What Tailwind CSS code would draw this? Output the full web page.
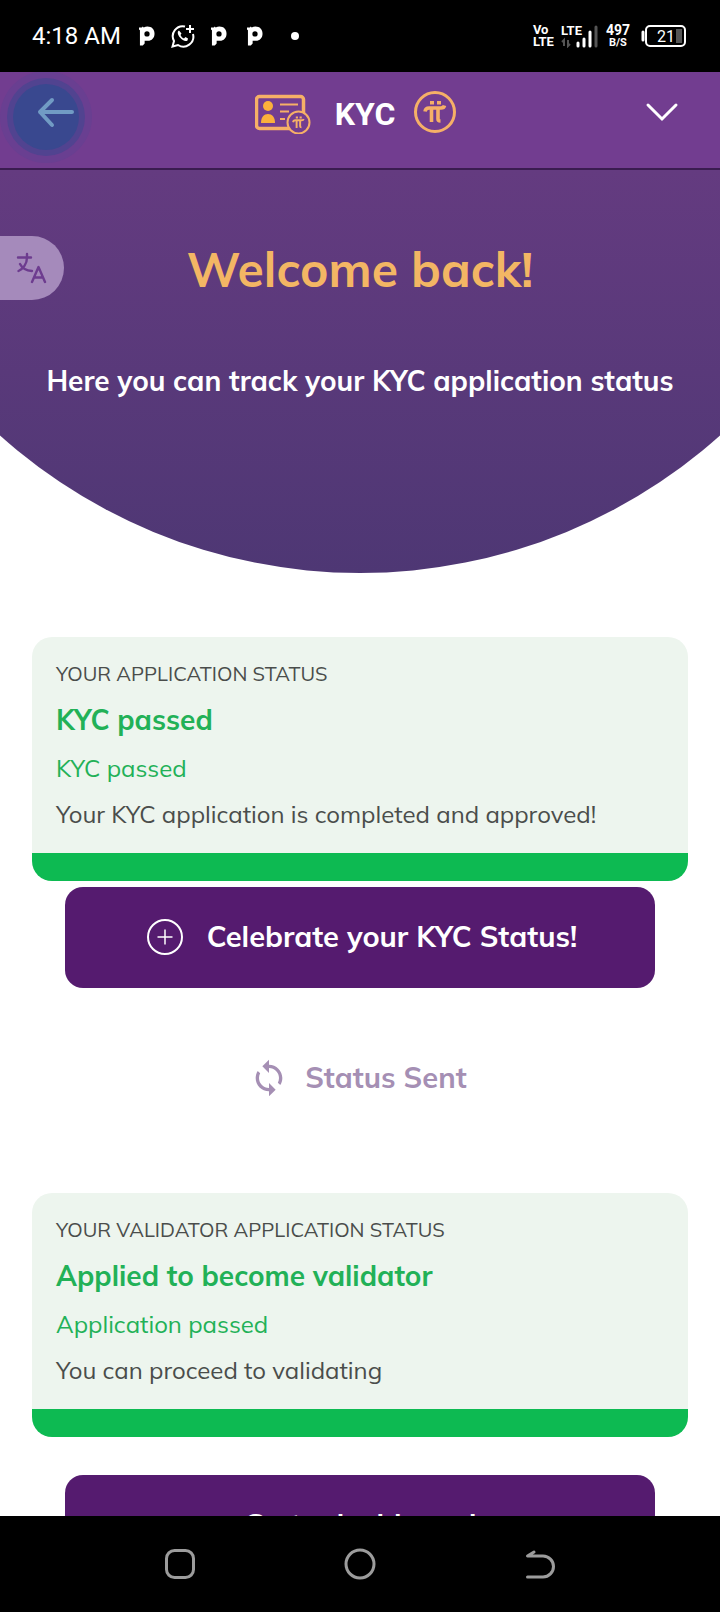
<!DOCTYPE html>
<html lang="en">
<head>
<meta charset="utf-8">
<meta name="viewport" content="width=device-width, initial-scale=1">
<title>KYC</title>
<script src="https://cdn.jsdelivr.net/npm/@tailwindcss/browser@4"></script>
</head>
<body class="flex h-screen flex-col overflow-hidden bg-white font-['Mulish','Noto_Sans',sans-serif]">
<svg class="hidden" aria-hidden="true">
  <symbol id="pi" viewBox="0 0 24 24">
    <path d="M2 11.500C2.500 8.500 4 8 6 8H18C20 8 21 7.500 21.500 5.500M8.500 8v14M15 8v11q0 2 2.500 2" fill="none" stroke="currentColor" stroke-width="3.600"/>
    <path d="M7 1h4v3.500h-4zM14 1h4v3.500h-4z" fill="currentColor"/>
  </symbol>
  <symbol id="p-app" viewBox="0 0 17 20">
    <path fill="currentColor" fill-rule="evenodd" d="M0 1h3l1-1 1 1q2-1 4-1c4.500 0 7.500 3 7.500 7.500S13.500 15 9.500 15H6v3l-2 2H1V4L0 3zM8.500 5a2.800 2.800 0 1 0 0 5.600a2.800 2.800 0 0 0 0-5.600z"/>
  </symbol>
</svg>

<div class="flex h-18 shrink-0 items-center justify-between bg-black px-8 font-['Roboto',sans-serif] text-white">
  <div class="flex items-center">
    <span class="text-2xl leading-8">4:18 AM</span>
    <svg class="ml-[18px] h-5 w-4"><use href="#p-app"/></svg>
    <svg class="ml-4 size-6" viewBox="0 0 24 24" fill="none" stroke="currentColor" stroke-width="2">
      <path d="M14 2.500A10 10 0 0 0 3 17L1.500 22.500L7 21A10 10 0 0 0 22 10M19 1v8M15 5h8"/>
      <path d="M8 6.500c-2 1-1.500 4 1 7s5.500 4.500 7.500 3l.5-2-2.500-1.500-1.500 1.500c-1.500-.500-3-2-3.500-3.500l1-1.500z" fill="currentColor" stroke="none"/>
    </svg>
    <svg class="ml-4 h-5 w-4"><use href="#p-app"/></svg>
    <svg class="ml-5 h-5 w-4"><use href="#p-app"/></svg>
    <span class="ml-7 size-2 rounded-full bg-white"></span>
  </div>
  <div class="flex items-center gap-1.5">
    <div class="flex flex-col text-[13px] leading-3 font-bold"><span>Vo</span><span>LTE</span></div>
    <svg class="h-6 w-10" viewBox="0 0 40 24">
      <text x="1" y="11" fill="currentColor" class="text-[13px] font-bold">LTE</text>
      <path d="M4 22v-6l-2 2M8 16v6l2-2" stroke="#555" stroke-width="2" fill="none"/>
      <path d="M18 22v-3M24 22v-7M30 22V8" stroke="currentColor" stroke-width="3" stroke-linecap="round"/>
      <path d="M36 22V3" stroke="#555" stroke-width="3" stroke-linecap="round"/>
    </svg>
    <div class="flex flex-col items-center font-bold"><span class="text-[14px] leading-[13px]">497</span><span class="text-[11px] leading-[11px]">B/S</span></div>
    <svg class="ml-1 h-6 w-12" viewBox="0 0 48 24">
      <rect x="6" y="2" width="39" height="20" rx="4" fill="none" stroke="currentColor" stroke-width="2"/>
      <path d="M3 8v8" stroke="currentColor" stroke-width="3" stroke-linecap="round"/>
      <rect x="36" y="5" width="6" height="14" fill="#555"/>
      <text x="17" y="18" fill="currentColor" class="text-[16px]">21</text>
    </svg>
  </div>
</div>

<header class="relative flex h-[98px] shrink-0 items-center justify-center border-b-2 border-[#3a1c50] bg-[#723d90] pr-2 pb-4">
  <button aria-label="Back" class="absolute top-0 left-0 text-[#719bc4]">
    <svg class="size-24" viewBox="0 0 96 96" fill="none">
      <circle cx="46" cy="45" r="46" fill="#693f91"/>
      <circle cx="46" cy="45" r="39" fill="#514390"/>
      <circle cx="46" cy="45" r="33" fill="#39488f"/>
      <path d="M72 40H40M52 28L40 40L52 53" stroke="currentColor" stroke-width="4" stroke-linecap="round" stroke-linejoin="round"/>
    </svg>
  </button>
  <svg class="h-11 w-14 text-[#f6b067]" viewBox="0 0 56 44" fill="none">
    <rect x="1.500" y="6.500" width="47" height="32" rx="3" stroke="currentColor" stroke-width="3.500"/>
    <circle cx="13" cy="16" r="5" fill="#fbb03b"/>
    <path d="M6 33c0-6 3-9 7-9s7 3 7 9z" fill="#fbb03b"/>
    <path d="M25 14.500h18M25 21.500h9M25 29h5" stroke="currentColor" stroke-width="2"/>
    <circle cx="43.500" cy="32.500" r="11" fill="#723d90" stroke="currentColor" stroke-width="2"/>
    <use href="#pi" x="37" y="25.500" width="13" height="14"/>
  </svg>
  <h1 class="mt-1 ml-6 font-['Roboto',sans-serif] text-[32px] leading-10 font-bold text-white">KYC</h1>
  <svg class="ml-[18px] size-11 text-[#f6b067]" viewBox="0 0 44 44">
    <circle cx="22" cy="22" r="19.500" fill="none" stroke="currentColor" stroke-width="3"/>
    <use href="#pi" x="10" y="10" width="24" height="24"/>
  </svg>
  <button aria-label="Expand" class="absolute top-6 right-10 text-white">
    <svg class="size-9" viewBox="0 0 36 36"><path d="M4 9L18 23L32 9" fill="none" stroke="currentColor" stroke-width="3" stroke-linecap="round"/></svg>
  </button>
</header>

<main class="flex min-h-0 flex-1 flex-col overflow-hidden">
  <section class="relative shrink-0 bg-linear-to-b from-[#643b80] to-[#4e3774] pt-[67px] pb-[172px] text-center [clip-path:circle(75vw_at_50%_calc(100%-75vw))]">
    <button aria-label="Translate" class="absolute top-[66px] left-0 flex h-16 w-16 items-center justify-center rounded-r-full bg-[#a58abb] text-[#6d3c8f]">
      <svg class="size-8" viewBox="0 0 32 32" fill="none" stroke="currentColor" stroke-width="2.400" stroke-linecap="round" stroke-linejoin="round">
        <path d="M2 5.500h13M11 2v3.500C11 12 7 17 2.500 19M4 12c2 4 5 6.500 12 7M16 30L22.500 15L29 30M18 25.500h9"/>
      </svg>
    </button>
    <h2 class="text-[48px] leading-16 font-bold text-[#f3b664]">Welcome back!</h2>
    <p class="mt-15 text-[28px] leading-10 font-bold text-white">Here you can track your KYC application status</p>
  </section>

  <section class="mx-8 mt-16 shrink-0 rounded-[20px] border-b-[28px] border-[#0dba52] bg-[#edf5ee] px-6 pt-[19px] pb-[21px] text-[#4a4d4b]">
    <h3 class="text-[20px] leading-9">YOUR APPLICATION STATUS</h3>
    <p class="mt-2 text-[28px] leading-10 font-bold text-[#22b157]">KYC passed</p>
    <p class="mt-2 text-[24px] leading-10 text-[#22b157]">KYC passed</p>
    <p class="mt-2 text-[24px] leading-9">Your KYC application is completed and approved!</p>
  </section>
  <button class="mx-[65px] mt-1.5 flex h-[101px] shrink-0 items-center justify-center gap-6 rounded-[18px] bg-[#551b6f] pb-0.5 pl-1 text-[29px] font-bold text-white">
    <svg class="size-9" viewBox="0 0 36 36" fill="none" stroke="currentColor"><circle cx="18" cy="18" r="17" stroke-width="2"/><path d="M18 10.500v15M10.500 18h15" stroke-width="1.500"/></svg>
    Celebrate your KYC Status!
  </button>
  <button class="mx-[65px] mt-10 flex h-[99px] shrink-0 items-center justify-center gap-4 pr-1 text-[29px] font-bold text-[#a58fb4]">
    <svg class="size-10" viewBox="0 0 24 24" fill="currentColor"><path d="M12 4V1L8 5l4 4V6c3.310 0 6 2.690 6 6 0 1.010-.250 1.970-.700 2.800l1.460 1.460C19.540 15.030 20 13.570 20 12c0-4.420-3.580-8-8-8zm0 14c-3.310 0-6-2.690-6-6 0-1.010.250-1.970.700-2.800L5.240 7.740C4.460 8.970 4 10.430 4 12c0 4.420 3.580 8 8 8v3l4-4-4-4v3z"/></svg>
    Status Sent
  </button>

  <section class="mx-8 mt-[66px] shrink-0 rounded-[20px] border-b-[28px] border-[#0dba52] bg-[#edf5ee] px-6 pt-[19px] pb-[21px] text-[#4a4d4b]">
    <h3 class="text-[20px] leading-9">YOUR VALIDATOR APPLICATION STATUS</h3>
    <p class="mt-2 text-[28px] leading-10 font-bold text-[#22b157]">Applied to become validator</p>
    <p class="mt-2 text-[24px] leading-10 text-[#22b157]">Application passed</p>
    <p class="mt-2 text-[24px] leading-9">You can proceed to validating</p>
  </section>
  <button class="mx-[65px] mt-[38px] flex h-[101px] shrink-0 items-center justify-center rounded-[18px] bg-[#551b6f] pb-0.5 text-[29px] font-bold text-white">Go to dashboard</button>
</main>

<nav class="flex h-24 shrink-0 items-center justify-center gap-[148px] bg-black text-[#9c9c9c]">
  <button aria-label="Recent apps"><svg class="size-8" viewBox="0 0 32 32" fill="none" stroke="currentColor" stroke-width="3"><rect x="2.500" y="2.500" width="27" height="27" rx="8"/></svg></button>
  <button aria-label="Home"><svg class="size-8" viewBox="0 0 32 32" fill="none" stroke="currentColor" stroke-width="3"><circle cx="16" cy="16" r="14"/></svg></button>
  <button aria-label="Back"><svg class="size-8" viewBox="0 0 32 32" fill="none" stroke="currentColor" stroke-width="3" stroke-linecap="round" stroke-linejoin="round"><path d="M10 4L3.500 8H19a10.500 10.500 0 0 1 0 21H3.500"/></svg></button>
</nav>
</body>
</html>
